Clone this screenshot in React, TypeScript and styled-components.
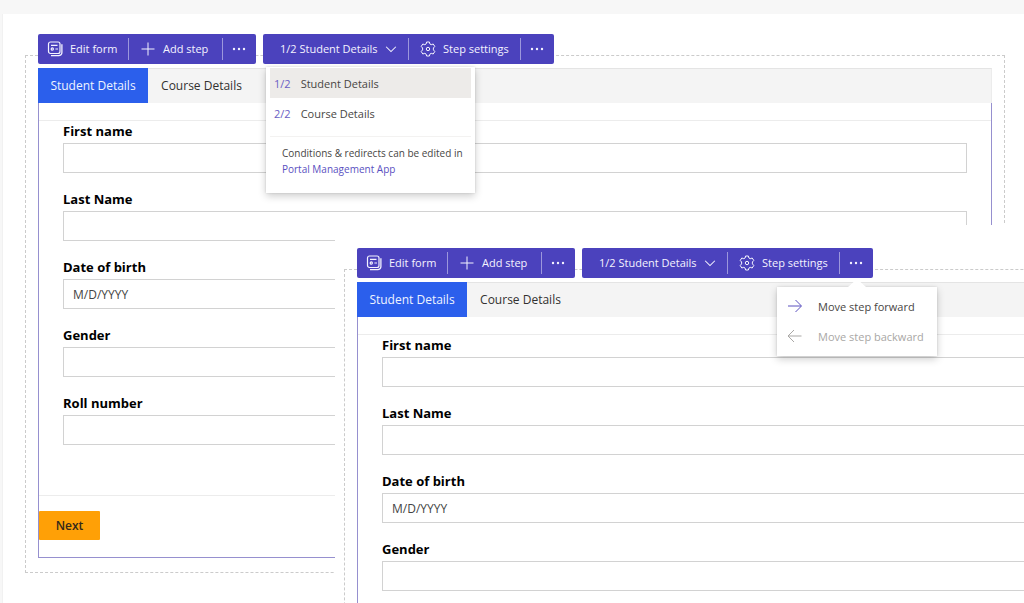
import React from "react";
import styled, { createGlobalStyle } from "styled-components";

const GlobalStyle = createGlobalStyle`
  *, *::before, *::after { box-sizing: border-box; }
  body {
    margin: 0;
    background: #f7f7f7;
    color: #323130;
    font-family: "Open Sans", "Noto Sans", sans-serif;
    font-size: 12px;
  }
  button, input { font: inherit; color: inherit; }
  svg { flex-shrink: 0; }
`;

const Page = styled.div`
  min-height: 100vh;
  padding: 14px 0 0 3px;
  display: flex;
`;

const Canvas = styled.main`
  position: relative;
  flex: 1;
  min-width: 0;
  padding: 41px 19px 30px 22px;
  background: #fff;
  border-left: 1px solid #f1f1f1;
  margin-left: -1px;
  overflow: hidden;
`;

const Overlay = styled.section`
  position: absolute;
  top: 211px;
  left: 332px;
  right: 0;
  bottom: 0;
  padding: 44px 0 0 9px;
  background: #fff;
  overflow: hidden;
`;

const Frame = styled.div<{ $wide?: boolean }>`
  width: ${(p) => (p.$wide ? "calc(100vw - 44px)" : "auto")};
  padding: 0 12px 14px;
  border: 1px dashed #cbcbcb;
`;

const Toolbars = styled.div`
  display: flex;
  gap: 7px;
  margin-top: -22px;
`;

const ToolGroup = styled.div`
  position: relative;
  display: flex;
  align-items: center;
  height: 30px;
  border-radius: 2px;
  background: #4b42bd;
`;

const ToolButton = styled.button<{ $width: number; $start?: number }>`
  display: flex;
  align-items: center;
  gap: 7px;
  width: ${(p) => p.$width}px;
  height: 22px;
  padding: 0 0 0 ${(p) => p.$start ?? 8}px;
  border: 0;
  background: none;
  color: #f4f3ff;
  font-size: 11px;
  font-weight: 500;
  line-height: 22px;
  white-space: nowrap;
  & + & { border-left: 1px solid #9c97dc; }
`;

const TabStrip = styled.div`
  display: flex;
  height: 35px;
  margin-top: 4px;
  background: #f4f4f4;
  border-top: 1px solid #e4e4e4;
  border-right: 1px solid #ececec;
`;

const Tab = styled.button<{ $active?: boolean }>`
  margin-top: -1px;
  height: 35px;
  width: ${(p) => (p.$active ? 110 : 107)}px;
  padding: 0;
  border: 0;
  background: ${(p) => (p.$active ? "#2b5fec" : "transparent")};
  color: ${(p) => (p.$active ? "#eef3ff" : "#323130")};
`;

const FormBody = styled.form`
  padding: 17px 0;
  border: 1px solid #9690cf;
  border-top: 0;
`;

const Fields = styled.div`
  display: flex;
  flex-direction: column;
  gap: 16px;
  padding: 0 24px 50px;
  border-top: 1px solid #ececec;
  border-bottom: 1px solid #ececec;
`;

const Field = styled.label`
  display: flex;
  flex-direction: column;
  gap: 2px;
  color: #000;
  font-size: 13px;
  font-weight: 700;
  line-height: 20px;
`;

const TextBox = styled.input`
  width: 100%;
  height: 30px;
  padding: 0 9px;
  border: 1px solid #d2d2d2;
  background: #fff;
  color: #444;
  font-size: 12px;
  font-weight: 400;
  &::placeholder { color: #444; opacity: 1; }
`;

const NextButton = styled.button`
  display: block;
  width: 61px;
  height: 29px;
  margin-top: 15px;
  padding: 0;
  border: 0;
  border-radius: 1px;
  background: #ffa006;
  color: #33291a;
  font-weight: 600;
`;

const Popup = styled.div`
  position: absolute;
  z-index: 2;
  background: #fff;
  font-size: 11px;
  box-shadow: 0 3px 8px rgba(0, 0, 0, 0.2), 0 0 2px rgba(0, 0, 0, 0.12);
`;

const StepMenu = styled(Popup)`
  top: 33px;
  left: 3px;
  width: 209px;
  padding: 1px 4px 16px;
`;

const StepItem = styled.button<{ $selected?: boolean }>`
  display: flex;
  align-items: center;
  gap: 10px;
  width: 100%;
  height: 30px;
  padding: 0 4px;
  border: 0;
  background: ${(p) => (p.$selected ? "#edebe9" : "#fff")};
  color: #484644;
`;

const StepIndex = styled.span`
  color: #6a60c4;
`;

const Note = styled.p`
  margin: 8px 0 0;
  padding: 8px 12px 0;
  border-top: 1px solid #f3f2f1;
  color: #484644;
  font-size: 10px;
  line-height: 16px;
  white-space: nowrap;
`;

const NoteLink = styled.a`
  display: block;
  color: #5a50bf;
  text-decoration: none;
`;

const MoveMenu = styled(Popup)`
  top: 39px;
  left: 195px;
  width: 160px;
  padding: 4px 0 5px;
  &::before {
    content: "";
    position: absolute;
    top: -8px;
    left: 71px;
    border: solid transparent;
    border-width: 0 9px 8px;
    border-bottom-color: #fff;
  }
`;

const MoveItem = styled.button`
  display: flex;
  align-items: center;
  gap: 15px;
  width: 100%;
  height: 30px;
  padding: 0 10px;
  border: 0;
  background: none;
  color: #484644;
  white-space: nowrap;
  svg { color: #5a50bf; }
  &:disabled, &:disabled svg { color: #a9a7a5; }
`;

const Icon = ({ size = 16, children }: { size?: number; children: React.ReactNode }) => (
  <svg width={size} height={size} viewBox="0 0 16 16" fill="none" stroke="currentColor" strokeWidth="1" aria-hidden="true">
    {children}
  </svg>
);

const FormIcon = () => (
  <Icon>
    <rect x="1.500" y="1" width="11.500" height="11.500" rx="2" strokeWidth="1.200" />
    <path d="M14.900 3.200v8.300a3.200 3.200 0 0 1-3.200 3.200H4" strokeWidth="1.300" />
    <path d="M4 4.300h6.500M8.400 8h2.600" strokeWidth="1.200" />
    <circle cx="5.300" cy="8" r="1.100" strokeWidth="1.200" />
  </Icon>
);

const PlusIcon = () => (
  <Icon><path d="M8 1.500v13M1.500 8h13" /></Icon>
);

const DotsIcon = () => (
  <Icon>
    <g fill="currentColor" stroke="none">
      <circle cx="3" cy="8" r="1.200" /><circle cx="8" cy="8" r="1.200" /><circle cx="13" cy="8" r="1.200" />
    </g>
  </Icon>
);

const ChevronIcon = () => (
  <Icon size={12}><path d="M1.500 5 8 11.500 14.500 5" strokeWidth="1.400" /></Icon>
);

const GearIcon = () => (
  <Icon>
    <path d="M6.600 1h2.800l.5 2 1.300.7 2-.7 1.600 2.400-1.400 1.600v1.900l1.400 1.600-1.600 2.500-2-.7-1.300.8-.5 1.900H6.600l-.5-1.900-1.300-.8-2 .7-1.600-2.500 1.400-1.600V7L1.200 5.400 2.800 3l2 .7L6.100 3z" strokeLinejoin="round" />
    <circle cx="8" cy="8" r="1.700" />
  </Icon>
);

const ArrowIcon = ({ back }: { back?: boolean }) => (
  <Icon>
    {back ? <path d="M14.500 8h-13M7 2 1 8l6 6" /> : <path d="M1 8h13M8.500 2l6 6-6 6" />}
  </Icon>
);

type FieldSpec = { name: string; placeholder?: string };

const detailFields: FieldSpec[] = [
  { name: "First name" },
  { name: "Last Name" },
  { name: "Date of birth", placeholder: "M/D/YYYY" },
  { name: "Gender" },
];

type StepFormProps = {
  menu: "steps" | "move";
  fields: FieldSpec[];
  footer?: React.ReactNode;
};

function StepForm({ menu, fields, footer }: StepFormProps) {
  return (
    <Frame $wide={menu === "move"}>
      <Toolbars>
        <ToolGroup>
          <ToolButton $width={90} $start={9}><FormIcon />Edit form</ToolButton>
          <ToolButton $width={94} $start={11}><PlusIcon />Add step</ToolButton>
          <ToolButton $width={34} aria-label="More form actions"><DotsIcon /></ToolButton>
        </ToolGroup>
        <ToolGroup>
          <ToolButton $width={145} $start={17}><span>1/2 Student Details</span><ChevronIcon /></ToolButton>
          <ToolButton $width={112} $start={11}><GearIcon />Step settings</ToolButton>
          <ToolButton $width={34} aria-label="More step actions"><DotsIcon /></ToolButton>
          {menu === "steps" ? (
            <StepMenu>
              <StepItem $selected><StepIndex>1/2</StepIndex>Student Details</StepItem>
              <StepItem><StepIndex>2/2</StepIndex>Course Details</StepItem>
              <Note>
                Conditions &amp; redirects can be edited in
                <NoteLink href="#portal">Portal Management App</NoteLink>
              </Note>
            </StepMenu>
          ) : (
            <MoveMenu>
              <MoveItem><ArrowIcon />Move step forward</MoveItem>
              <MoveItem disabled><ArrowIcon back />Move step backward</MoveItem>
            </MoveMenu>
          )}
        </ToolGroup>
      </Toolbars>
      <TabStrip>
        <Tab $active>Student Details</Tab>
        <Tab>Course Details</Tab>
      </TabStrip>
      <FormBody>
        <Fields>
          {fields.map((f) => (
            <Field key={f.name}>
              {f.name}
              <TextBox type="text" placeholder={f.placeholder} />
            </Field>
          ))}
        </Fields>
        {footer}
      </FormBody>
    </Frame>
  );
}

export default function App() {
  return (
    <>
      <GlobalStyle />
      <Page>
        <Canvas>
          <StepForm
            menu="steps"
            fields={[...detailFields, { name: "Roll number" }]}
            footer={<NextButton type="button">Next</NextButton>}
          />
          <Overlay>
            <StepForm menu="move" fields={detailFields} />
          </Overlay>
        </Canvas>
      </Page>
    </>
  );
}
